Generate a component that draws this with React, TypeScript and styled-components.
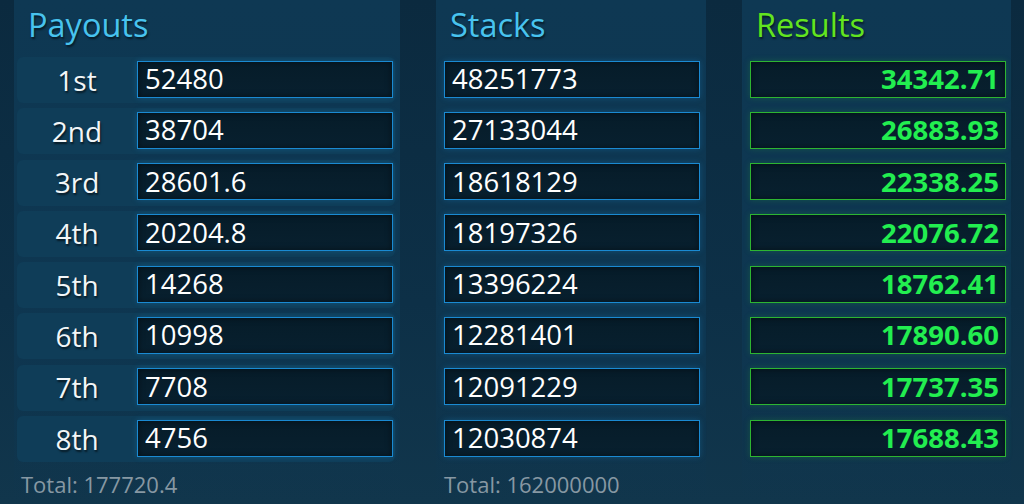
import React from "react";
import styled, { createGlobalStyle } from "styled-components";

const GlobalStyle = createGlobalStyle`
  html, body {
    margin: 0;
    padding: 0;
    background: #0c2d42;
  }
  body {
    font-family: "Open Sans", "DejaVu Sans", sans-serif;
  }
`;

const Page = styled.div`
  width: 1024px;
  height: 504px;
  box-sizing: border-box;
  padding-left: 14px;
  display: flex;
  gap: 36px;
  background: linear-gradient(180deg, #0b2a3f 0%, #0d3047 60%, #11364c 100%);
  overflow: hidden;
`;

const Panel = styled.div<{ $width: number; $padLeft: number }>`
  width: ${({ $width }) => $width}px;
  box-sizing: border-box;
  padding-left: ${({ $padLeft }) => $padLeft}px;
  display: flex;
  flex-direction: column;
  background: linear-gradient(180deg, #0e3853 0%, #0e3650 70%, rgba(17, 54, 76, 0) 100%);
`;

const Heading = styled.h2<{ $green?: boolean; $indent: number }>`
  margin: 0;
  height: 57px;
  box-sizing: border-box;
  padding: 3px 0 0 ${({ $indent }) => $indent}px;
  font-size: 32.5px;
  font-weight: 400;
  line-height: 44px;
  color: ${({ $green }) => ($green ? "#62e41f" : "#48c3ee")};
  text-shadow: 1px 2px 2px rgba(0, 0, 0, 0.55);
`;

const Rows = styled.div`
  display: flex;
  flex-direction: column;
  gap: 5.3px;
`;

const Row = styled.div<{ $boxed?: boolean }>`
  height: 46px;
  display: flex;
  align-items: center;
  padding-bottom: 1px;
  box-sizing: border-box;
  border-radius: 6px;
  background: ${({ $boxed }) => ($boxed ? "#0f3d58" : "transparent")};
  margin-left: ${({ $boxed }) => ($boxed ? 3 : 0)}px;
  width: ${({ $boxed }) => ($boxed ? "378px" : "auto")};
`;

const Rank = styled.div`
  width: 120px;
  text-align: center;
  font-size: 28px;
  color: #f2f6f8;
  text-shadow: 1px 2px 2px rgba(0, 0, 0, 0.6);
`;

const Field = styled.div<{ $result?: boolean }>`
  width: 256px;
  height: 37px;
  box-sizing: border-box;
  margin-top: -1px;
  border: 1px solid ${({ $result }) => ($result ? "#2db532" : "#1a8ad2")};
  background: linear-gradient(180deg, #061c29 0%, #08202f 100%);
  box-shadow: 0 0 6px ${({ $result }) => ($result ? "rgba(45, 180, 60, 0.25)" : "rgba(30, 140, 210, 0.3)")},
    inset 0 0 6px rgba(0, 0, 0, 0.5);
  display: flex;
  align-items: center;
  justify-content: ${({ $result }) => ($result ? "flex-end" : "flex-start")};
  padding: ${({ $result }) => ($result ? "0 6px 1px 0" : "0 0 1px 7px")};
  font-size: 27.5px;
  font-weight: ${({ $result }) => ($result ? 700 : 400)};
  color: ${({ $result }) => ($result ? "#22ee50" : "#ffffff")};
`;

const Total = styled.div<{ $indent: number }>`
  margin-top: 7px;
  padding-left: ${({ $indent }) => $indent}px;
  font-size: 22px;
  color: #8798a3;
`;

const payouts = ["52480", "38704", "28601.6", "20204.8", "14268", "10998", "7708", "4756"];
const stacks = ["48251773", "27133044", "18618129", "18197326", "13396224", "12281401", "12091229", "12030874"];
const results = ["34342.71", "26883.93", "22338.25", "22076.72", "18762.41", "17890.60", "17737.35", "17688.43"];
const ranks = ["1st", "2nd", "3rd", "4th", "5th", "6th", "7th", "8th"];

export default function App() {
  return (
    <>
      <GlobalStyle />
      <Page>
        <Panel $width={386} $padLeft={0}>
          <Heading $indent={14}>Payouts</Heading>
          <Rows>
            {payouts.map((p, i) => (
              <Row key={i} $boxed>
                <Rank>{ranks[i]}</Rank>
                <Field>{p}</Field>
              </Row>
            ))}
          </Rows>
          <Total $indent={7}>Total: 177720.4</Total>
        </Panel>
        <Panel $width={270} $padLeft={8}>
          <Heading $indent={6}>Stacks</Heading>
          <Rows>
            {stacks.map((s, i) => (
              <Row key={i}>
                <Field>{s}</Field>
              </Row>
            ))}
          </Rows>
          <Total $indent={0}>Total: 162000000</Total>
        </Panel>
        <Panel $width={269} $padLeft={8}>
          <Heading $indent={6} $green>Results</Heading>
          <Rows>
            {results.map((r, i) => (
              <Row key={i}>
                <Field $result>{r}</Field>
              </Row>
            ))}
          </Rows>
        </Panel>
      </Page>
    </>
  );
}
